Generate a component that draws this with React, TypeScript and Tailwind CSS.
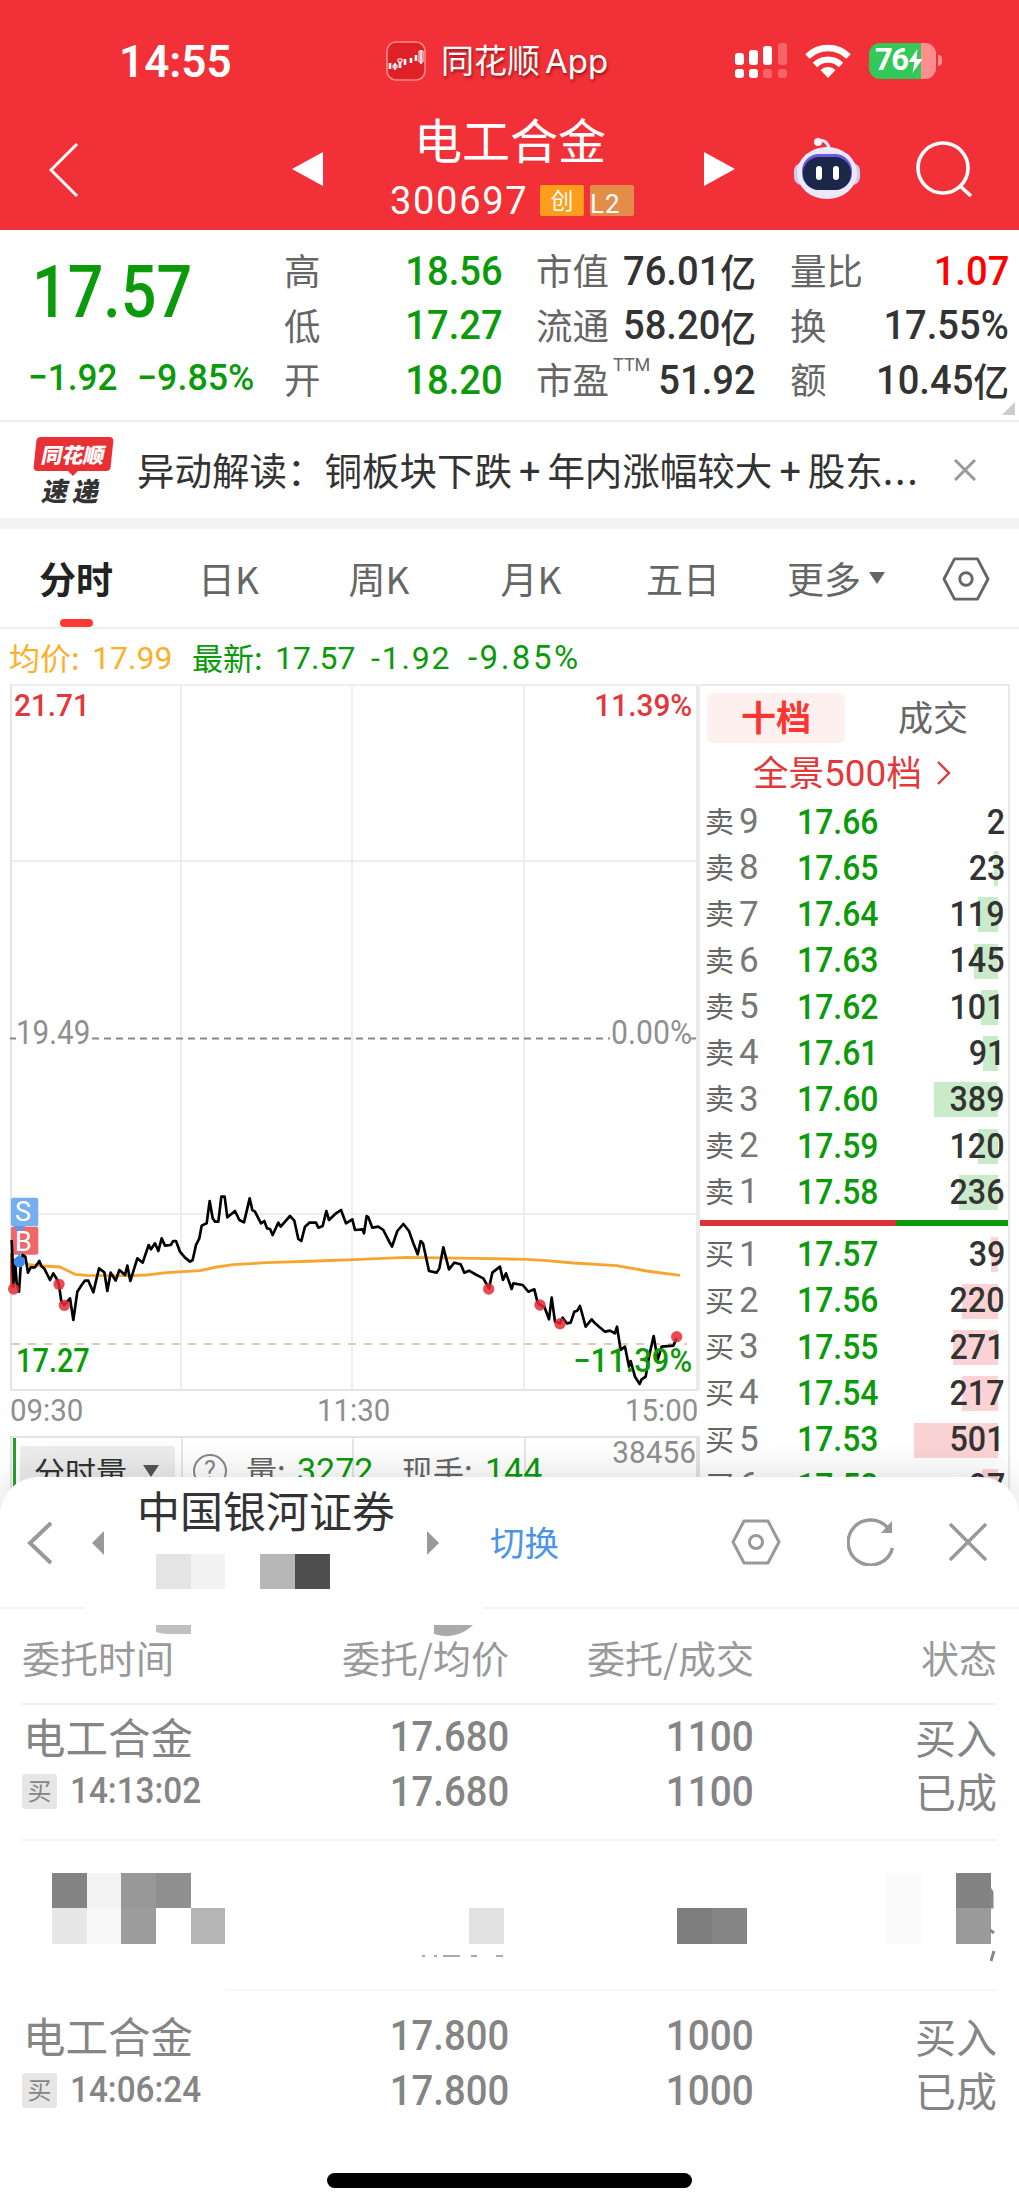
import type { ReactNode } from "react";

interface Level {
  side: string;
  no: number;
  price: string;
  qty: number;
  bar: number;
}

interface Order {
  time: string;
  price: string;
  amount: string;
}

const asks: Level[] = [
  { side: "卖", no: 9, price: "17.66", qty: 2, bar: 0 },
  { side: "卖", no: 8, price: "17.65", qty: 23, bar: 4 },
  { side: "卖", no: 7, price: "17.64", qty: 119, bar: 20 },
  { side: "卖", no: 6, price: "17.63", qty: 145, bar: 24 },
  { side: "卖", no: 5, price: "17.62", qty: 101, bar: 17 },
  { side: "卖", no: 4, price: "17.61", qty: 91, bar: 15 },
  { side: "卖", no: 3, price: "17.60", qty: 389, bar: 64 },
  { side: "卖", no: 2, price: "17.59", qty: 120, bar: 20 },
  { side: "卖", no: 1, price: "17.58", qty: 236, bar: 39 },
];

const bids: Level[] = [
  { side: "买", no: 1, price: "17.57", qty: 39, bar: 7 },
  { side: "买", no: 2, price: "17.56", qty: 220, bar: 36 },
  { side: "买", no: 3, price: "17.55", qty: 271, bar: 45 },
  { side: "买", no: 4, price: "17.54", qty: 217, bar: 36 },
  { side: "买", no: 5, price: "17.53", qty: 501, bar: 84 },
  { side: "买", no: 6, price: "17.52", qty: 97, bar: 16 },
];

const pricePoints =
  "35,240 40,380 45,300 50,370 57,395 62,320 68,285 76,290 84,338 92,322 105,322 118,303 124,318 133,326 150,360 160,340 172,360 177,375 184,425 193,435 210,415 220,480 232,395 245,375 255,362 265,362 280,397 297,325 313,337 322,393 332,338 347,362 358,330 375,345 382,317 391,363 412,295 428,308 446,255 453,268 465,250 475,273 485,235 495,257 512,255 520,243 528,243 540,275 555,293 570,305 578,300 588,255 598,235 605,197 620,190 629,123 638,175 645,185 655,185 664,110 674,110 682,172 705,153 718,180 732,187 749,115 757,150 765,155 783,190 793,183 801,205 810,207 818,225 835,188 842,200 870,168 883,182 895,237 904,243 915,200 928,188 948,188 955,203 968,198 979,153 987,180 1008,160 1023,150 1038,190 1057,178 1065,210 1088,208 1092,220 1100,168 1105,172 1117,203 1135,200 1150,210 1165,240 1176,260 1192,213 1210,192 1227,213 1240,250 1253,283 1262,243 1269,250 1287,333 1310,338 1318,325 1330,262 1347,328 1363,308 1382,313 1393,338 1407,332 1430,345 1450,355 1467,385 1477,338 1500,320 1509,360 1518,340 1535,387 1540,370 1568,375 1585,395 1603,388 1612,425 1620,435 1633,440 1647,478 1655,413 1665,485 1680,490 1688,473 1700,490 1712,488 1723,455 1732,452 1740,438 1757,500 1775,478 1785,490 1815,515 1830,512 1845,520 1851,500 1862,570 1875,560 1887,620 1892,603 1905,650 1919,672 1925,658 1937,650 1947,590 1961,528 1973,600 1985,560 2020,557 2030,535";

const avgPoints =
  "80,313 130,318 180,321 205,333 225,343 260,346 400,347 440,345 500,338 600,332 650,321 700,314 800,308 950,303 1080,298 1220,292 1420,295 1580,298 1640,302 1720,309 1850,317 1940,333 2040,346";

const redDots = [
  [41, 387],
  [177, 373],
  [193, 436],
  [1466, 387],
  [1620, 435],
  [1680, 491],
  [2030, 530],
];

const tabs = [
  { label: "日K", width: "w-[153px]" },
  { label: "周K", width: "w-[148px]" },
  { label: "月K", width: "w-[156px]" },
  { label: "五日", width: "w-[148px]" },
];

function Num({ children, className = "" }: { children: ReactNode; className?: string }) {
  return (
    <span className={`inline-block whitespace-nowrap font-[Roboto,sans-serif] ${className}`}>
      {children}
    </span>
  );
}

function Hexagon({ className }: { className: string }) {
  return (
    <svg viewBox="0 0 50 46" className={className} fill="none" stroke="currentColor" strokeWidth="3">
      <path d="M13 2h24l11 21-11 21H13L2 23z" strokeLinejoin="round" />
      <circle cx="25" cy="23" r="6.5" />
    </svg>
  );
}

function StatusBar() {
  return (
    <div className="flex h-[118px] items-center pt-[3px]">
      <Num className="mt-[2px] ml-[119px] w-[267px] font-['Inter'] text-[44px] font-semibold">
        14:55
      </Num>
      <svg viewBox="0 0 40 40" className="size-10 shrink-0">
        <rect x="1" y="1" width="38" height="38" rx="9" fill="#e02027" stroke="#ff8a86" strokeWidth="1.6" />
        <g fill="#fff" stroke="#fff">
          <path d="M4 22v6M14 21v6M19 18v6M25 17v5M30 14v6" strokeWidth="2.6" />
          <path d="M9 22v7M35 9v14" strokeWidth="1.6" />
          <path d="M7 24h4v3H7zM12 18h4v3h-4zM33 10h4v11h-4z" fill="none" strokeWidth="1" />
        </g>
      </svg>
      <span className="ml-[15px] w-[294px] shrink-0 text-[33px] leading-none [text-shadow:1px_2px_3px_rgba(90,0,0,.6)]">
        同花顺<span className="ml-[5px] font-['Inter'] text-[33px]">App</span>
      </span>
      <svg viewBox="0 0 52 36" className="h-9 w-[52px]" fill="#fff">
        <rect x="0" y="10" width="9" height="12" rx="3" />
        <rect x="14" y="7" width="9" height="15" rx="3" />
        <rect x="28" y="3" width="9" height="19" rx="3" />
        <rect x="43" y="0" width="9" height="22" rx="3" opacity=".25" />
        <rect x="0" y="26" width="9" height="9" rx="3" />
        <rect x="14" y="26" width="9" height="9" rx="3" />
        <rect x="28" y="26" width="9" height="9" rx="3" opacity=".25" />
        <rect x="43" y="26" width="9" height="9" rx="3" opacity=".25" />
      </svg>
      <svg viewBox="0 0 46 34" className="ml-[18px] h-[34px] w-[46px]" fill="none" stroke="#fff" strokeWidth="6.4">
        <path d="M2.5 12.5a29 29 0 0 1 41 0" />
        <path d="M10 21a18.5 18.5 0 0 1 26 0" />
        <path d="M23 34l-7.5-8a11 11 0 0 1 15 0z" fill="#fff" stroke="none" />
      </svg>
      <div className="ml-[18px] flex items-center">
        <div className="flex h-9 w-[67px] items-center overflow-hidden rounded-[11px] bg-[linear-gradient(90deg,#34c759_0_52px,#ff8f8d_52px)] pl-[6px]">
          <Num className="font-['Inter'] text-[31px] font-bold tracking-[-1.5px]">76</Num>
          <svg viewBox="0 0 14 24" className="h-6 w-[15px]" fill="#fff">
            <path d="M9 0L0 13h6l-2 11 10-14H8z" />
          </svg>
        </div>
        <div className="ml-[2px] h-[11px] w-[4px] rounded-r-full bg-[#ff8f8d]" />
      </div>
    </div>
  );
}

function TitleBar() {
  return (
    <div className="flex h-[112px]">
      <svg viewBox="0 0 30 54" className="mt-[25px] ml-[49px] h-[54px] w-[30px]" fill="none" stroke="#fff" strokeWidth="3">
        <path d="M28 1L2 27l26 26" />
      </svg>
      <svg viewBox="0 0 31 34" className="mt-[34px] ml-[213px] h-[34px] w-[31px]" fill="#fff">
        <path d="M31 0v34L0 17z" />
      </svg>
      <div className="flex w-[381px] flex-col items-center">
        <h1 className="mt-[-5px] mr-[7px] h-[62px] text-[48px] leading-[50px] whitespace-nowrap">电工合金</h1>
        <div className="flex h-[50px] w-full items-center gap-[6px] pl-[67px]">
          <Num className="mt-[3px] w-[144px] font-['Inter'] text-[38px] tracking-[1.7px]">300697</Num>
          <span className="flex h-[31px] w-[44px] items-center justify-center rounded-[2px] bg-[#ff9d1c] pb-[2px] text-[23px]">创</span>
          <Num className="flex h-[31px] w-[44px] items-center justify-center rounded-[2px] bg-[#e38d49] text-[26px]">
            <span className="-mt-[3px] leading-none tracking-[1px]">L2</span>
          </Num>
        </div>
      </div>
      <svg viewBox="0 0 31 34" className="mt-[34px] h-[34px] w-[31px]" fill="#fff">
        <path d="M0 0v34l31-17z" />
      </svg>
      <svg viewBox="0 0 66 62" className="mt-[19px] ml-[59px] h-[62px] w-[66px]">
        <path d="M24 4q9-3 12 10" fill="none" stroke="#f3eefc" strokeWidth="3" />
        <circle cx="24" cy="5" r="4" fill="#f6f2ff" />
        <rect x="0" y="26" width="66" height="22" rx="8" fill="#cfc8f5" />
        <ellipse cx="33" cy="36" rx="30" ry="26" fill="#ece9fb" />
        <rect x="8" y="17" width="50" height="36" rx="17" fill="#6a5be0" />
        <rect x="9" y="20" width="48" height="33" rx="16" fill="#1b2649" />
        <rect x="22" y="29" width="6" height="14" rx="3" fill="#fff" />
        <rect x="39" y="29" width="6" height="14" rx="3" fill="#fff" />
      </svg>
      <svg viewBox="0 0 56 56" className="mt-[23px] ml-[56px] size-14" fill="none" stroke="#fff" strokeWidth="3.6">
        <circle cx="27" cy="27" r="25" />
        <path d="M43 44l12 11" />
      </svg>
    </div>
  );
}

function Quote({ label, value, color = "text-[#333]", unit = "" }: { label: ReactNode; value: string; color?: string; unit?: string }) {
  return (
    <div className="flex h-[54.5px] items-center justify-between">
      <span className="relative -top-px text-[36.5px] leading-none text-[#666]">{label}</span>
      <span className={`flex origin-right scale-x-[0.93] items-center font-medium ${color}`}>
        <Num className="text-[41px]">{value}</Num>
        {unit && <span className="relative -top-px text-[38.5px] leading-none">{unit}</span>}
      </span>
    </div>
  );
}

function QuotePanel() {
  return (
    <section className="flex h-[192px] shrink-0 border-b-2 border-[#eee] pt-[12px]">
      <div className="w-[284px] text-[#0a9a0a]">
        <Num className="mt-[8px] ml-[32px] h-[84px] origin-left scale-x-[0.86] text-[73px] leading-[84px] font-medium">17.57</Num>
        <div className="mt-[20px] flex">
          <Num className="ml-[28px] w-[109px] origin-left scale-x-[0.95] text-[37px] leading-[48px] font-medium">−1.92</Num>
          <Num className="origin-left scale-x-[0.98] text-[36.5px] leading-[48px] font-medium">−9.85%</Num>
        </div>
      </div>
      <div className="w-[219px] pt-[2px]">
        <Quote label="高" value="18.56" color="text-[#0a9a0a]" />
        <Quote label="低" value="17.27" color="text-[#0a9a0a]" />
        <Quote label="开" value="18.20" color="text-[#0a9a0a]" />
      </div>
      <div className="ml-[33px] w-[220px] pt-[2px]">
        <Quote label="市值" value="76.01" unit="亿" />
        <Quote label="流通" value="58.20" unit="亿" />
        <Quote
          label={
            <>
              市盈
              <Num className="absolute -top-[5px] left-[77px] text-[18px]">TTM</Num>
            </>
          }
          value="51.92"
        />
      </div>
      <div className="ml-[34px] w-[219px] pt-[2px]">
        <Quote label="量比" value="1.07" color="text-[#ff0000]" />
        <Quote label="换" value="17.55%" />
        <Quote label="额" value="10.45" unit="亿" />
      </div>
      <svg viewBox="0 0 13 13" className="mb-[5px] -ml-[7px] size-[13px] self-end" fill="#ccc">
        <path d="M13 0v13H0z" />
      </svg>
    </section>
  );
}

function NewsBar() {
  return (
    <section className="flex h-[96px] shrink-0 items-center text-[37.5px] text-[#333]">
      <div className="relative ml-[33px] flex w-[80px] flex-col items-center">
        <div className="flex h-[34px] w-[77px] -skew-x-6 items-center justify-center rounded-[4px] bg-[#e93035] text-[21px] leading-none font-black whitespace-nowrap text-white">
          <span className="-skew-x-6">同花顺</span>
        </div>
        <div className="-mt-px size-0 border-x-[6px] border-t-[6px] border-x-transparent border-t-[#e93035]" />
        <div className="-ml-[3px] flex -skew-x-12 gap-[5px] text-[26px] leading-[28px] font-black">
          <span>速</span>
          <span>递</span>
        </div>
      </div>
      <p className="mt-[-2px] ml-[24px] w-[817px] leading-none whitespace-nowrap">
        异动解读：铜板块下跌<span className="mx-[7px] font-medium">+</span>年内涨幅较大<span className="mx-[7px] font-medium">+</span>股东
        <span className="tracking-[1.8px]">...</span>
      </p>
      <svg viewBox="0 0 22 22" className="size-[22px]" stroke="#999" strokeWidth="3">
        <path d="M1 1l20 20M21 1L1 21" />
      </svg>
    </section>
  );
}

function Tabs() {
  return (
    <nav className="flex h-[100px] shrink-0 border-b-2 border-[#eee] text-[37px] leading-[98px] text-[#666]">
      <div className="flex w-[152px] flex-col items-center font-bold text-[#222]">
        <span className="h-[90px]">分时</span>
        <div className="h-[9px] w-[33px] rounded-[4px] bg-[#fb3a35]" />
      </div>
      {tabs.map((tab) => (
        <div key={tab.label} className={`text-center ${tab.width}`}>
          {tab.label}
        </div>
      ))}
      <div className="flex w-[158px] items-center justify-center gap-[8px]">
        更多
        <svg viewBox="0 0 16 12" className="h-3 w-4" fill="#666">
          <path d="M0 0h16L8 12z" />
        </svg>
      </div>
      <Hexagon className="mt-[28px] ml-[27px] h-[44px] w-[48px]" />
    </nav>
  );
}

function Legend() {
  return (
    <div className="flex h-[55px] shrink-0 items-center pt-[3px] pl-[9px] text-[32px] text-[#0a9a0a]">
      <span className="-mt-[4px] w-[83px] text-[31px] leading-none text-[#fbb029]">均价:</span>
      <Num className="w-[100px] text-[#fbb029]">17.99</Num>
      <span className="-mt-[4px] w-[83px] text-[31px] leading-none">最新:</span>
      <Num className="w-[96px]">17.57</Num>
      <Num className="w-[97px] tracking-[1.8px]">-1.92</Num>
      <Num className="text-[33px] tracking-[2.5px]">-9.85%</Num>
    </div>
  );
}

function Chart() {
  return (
    <div className="relative h-[708px] w-[700px]">
      <svg viewBox="0 0 700 708" className="h-[708px] w-[700px]" fill="none">
        <path d="M10 1h688M10 177h688M10 530h688M181 1v705M352 1v705M524 1v705" stroke="#eee" strokeWidth="2" />
        <path d="M11 1v705M10 706h688" stroke="#e4e4e4" strokeWidth="2" />
        <path d="M698 1v705" stroke="#ebebeb" strokeWidth="4" />
        <path d="M10 354.5h6M92 354.5h518M691 354.5h5" stroke="#888" strokeWidth="1.8" strokeDasharray="7 5" />
        <path d="M12 660h675" stroke="#e3cdb0" strokeWidth="2" strokeDasharray="8 8" />
        <g transform="translate(0 476) scale(.33333)">
          <rect x="33" y="113" width="82" height="86" rx="6" fill="#77aef2" />
          <rect x="33" y="200" width="82" height="84" rx="6" fill="#ee676a" />
          <path d="M36 280v100" stroke="#ee5055" strokeWidth="12" />
          <path d="M40 198h36L58 220z" fill="#5b97e6" />
          <path d="M58 210v90" stroke="#5b97e6" strokeWidth="7" strokeDasharray="14 8" />
          <polyline points={avgPoints} stroke="#f8a52f" strokeWidth="8.5" strokeLinejoin="round" />
          <polyline points={pricePoints} stroke="#000" strokeWidth="8" strokeLinejoin="round" />
          <circle cx="58" cy="305" r="17" fill="#3d8be8" />
          {redDots.map(([x, y]) => (
            <circle key={x} cx={x} cy={y} r="17" fill="#e62a33" fillOpacity=".85" />
          ))}
        </g>
      </svg>
      <Num className="absolute top-[514px] left-[15px] text-[27px] leading-[28px] text-white">S</Num>
      <Num className="absolute top-[544px] left-[15px] text-[27px] leading-[28px] text-white">B</Num>
      <Num className="absolute top-px left-[14px] origin-left scale-x-[0.93] text-[32px] leading-[40px] font-medium text-[#e3383b]">21.71</Num>
      <Num className="absolute top-px right-[8px] origin-right scale-x-[0.93] text-[32px] leading-[40px] font-medium text-[#e3383b]">11.39%</Num>
      <Num className="absolute top-[329px] left-[16px] origin-left scale-x-[0.91] text-[32.5px] leading-[40px] text-[#8f8f8f]">19.49</Num>
      <Num className="absolute top-[329px] right-[8px] origin-right scale-x-[0.93] text-[32.5px] leading-[40px] text-[#8f8f8f]">0.00%</Num>
      <Num className="absolute top-[657px] left-[16px] origin-left scale-x-[0.89] text-[32.5px] leading-[40px] font-medium text-[#0a9a0a]">17.27</Num>
      <Num className="absolute top-[657px] right-[8px] origin-right scale-x-[0.95] text-[32.5px] leading-[40px] font-medium text-[#0a9a0a]">−11.39%</Num>
    </div>
  );
}

function TimeAxis() {
  return (
    <div className="ml-[10px] grid h-[44px] w-[688px] grid-cols-3 items-center pb-[4px] text-[32px] leading-[38px] text-[#8f8f8f]">
      <Num className="-mt-[5px] origin-left scale-x-[0.92]">09:30</Num>
      <Num className="-mt-[5px] scale-x-[0.92] text-center">11:30</Num>
      <Num className="-mt-[5px] origin-right scale-x-[0.92] text-right">15:00</Num>
    </div>
  );
}

function VolumeBar() {
  return (
    <div className="ml-[10px] flex h-[90px] w-[690px] border-t-2 border-r-4 border-l-2 border-[#e4e4e4] bg-[linear-gradient(90deg,transparent_169px,#e6e6e6_169px_171px,transparent_171px_340px,#e6e6e6_340px_342px,transparent_342px_512px,#e6e6e6_512px_514px,transparent_514px)] text-[31px] text-[#666]">
      <div className="ml-px w-[3px] bg-[#27a12c]" />
      <div className="mt-[8px] ml-[4px] flex h-[52px] w-[155px] items-center gap-[16px] rounded-[4px] bg-[#ececec] pb-[3px] pl-[14px] text-[#333]">
        <span className="leading-none">分时量</span>
        <svg viewBox="0 0 16 12" className="h-3 w-4" fill="#555">
          <path d="M0 0h16L8 12z" />
        </svg>
      </div>
      <div className="mt-[16px] ml-[18px] flex size-[34px] items-center justify-center rounded-full border-2 border-[#888] font-[Roboto,sans-serif] text-[25px] text-[#888]">
        ?
      </div>
      <span className="mt-[14px] ml-[19px] w-[51px] leading-[36px]">量:</span>
      <Num className="mt-[13px] w-[105px] text-[34px] leading-[38px] text-[#0a9a0a]">3272</Num>
      <span className="mt-[14px] w-[83px] leading-[36px]">现手:</span>
      <Num className="mt-[13px] text-[34px] leading-[38px] text-[#0a9a0a]">144</Num>
      <Num className="mt-[-4px] ml-auto origin-right scale-x-[0.93] text-[32px] leading-[36px] text-[#8f8f8f]">38456</Num>
    </div>
  );
}

function LevelRow({ level, barColor }: { level: Level; barColor: string }) {
  return (
    <div className="relative flex h-[46.3px] items-center pl-[5px]">
      <div className={`absolute right-[10px] h-[35px] ${barColor}`} style={{ width: level.bar }} />
      <span className="relative -top-[2px] w-[34px] text-[29px] leading-none text-[#666]">{level.side}</span>
      <Num className="text-[35px] text-[#777]">{level.no}</Num>
      <Num className="absolute left-[97px] origin-left scale-x-[0.9] text-[35.5px] font-medium text-[#0a9a0a]">{level.price}</Num>
      <Num className="absolute right-[3px] origin-right scale-x-[0.91] text-[35.5px] font-medium text-[#333]">{level.qty}</Num>
    </div>
  );
}

function OrderBook() {
  return (
    <aside className="h-[842px] w-[310px] overflow-hidden border-t-2 border-r-2 border-[#e9e9e9]">
      <div className="mt-[7px] flex text-[35px] leading-[46px]">
        <div className="ml-[7px] h-[50px] w-[138px] rounded-[5px] bg-[#fff0f0] text-center font-bold text-[#fb3631]">十档</div>
        <div className="ml-[53px] text-[#666]">成交</div>
      </div>
      <div className="flex h-[56px] items-center gap-[16px] pt-[3px] pl-[53px] text-[35.5px] leading-none text-[#e3383b]">
        <span className="w-[168px] whitespace-nowrap">
          全景<Num className="text-[37px] leading-none">500</Num>档
        </span>
        <svg viewBox="0 0 14 24" className="h-6 w-[14px]" fill="none" stroke="currentColor" strokeWidth="2.4">
          <path d="M1 1l11 11L1 23" />
        </svg>
      </div>
      {asks.map((level) => (
        <LevelRow key={level.no} level={level} barColor="bg-[#c9ebca]" />
      ))}
      <div className="mt-[4px] mb-[6px] flex h-[6px]">
        <div className="w-[196px] bg-[#de3336]" />
        <div className="flex-1 bg-[#0a9a0a]" />
      </div>
      {bids.map((level) => (
        <LevelRow key={level.no} level={level} barColor="bg-[#fbd3d5]" />
      ))}
    </aside>
  );
}

function SheetHeader() {
  return (
    <div className="flex h-[130px] text-[#999]">
      <svg viewBox="0 0 26 44" className="mt-[44px] ml-[27px] h-[44px] w-[26px]" fill="none" stroke="currentColor" strokeWidth="4">
        <path d="M24 2L3 22l21 20" />
      </svg>
      <svg viewBox="0 0 12 24" className="mt-[54px] ml-[39px] h-6 w-3" fill="currentColor">
        <path d="M12 0v24L0 12z" />
      </svg>
      <div className="ml-[33px] w-[259px]">
        <h2 className="text-[43px] leading-[65px] whitespace-nowrap text-[#333]">中国银河证券</h2>
        <div className="mt-[12px] ml-[19px] flex h-[35px]">
          <div className="w-[35px] bg-[#e4e4e4]" />
          <div className="w-[34px] bg-[#f2f2f2]" />
          <div className="ml-[35px] w-[35px] bg-[#b7b7b7]" />
          <div className="w-[35px] bg-[#4e4e4e]" />
        </div>
      </div>
      <svg viewBox="0 0 12 24" className="mt-[54px] ml-[31px] h-6 w-3" fill="currentColor">
        <path d="M0 0v24l12-12z" />
      </svg>
      <span className="mt-[46px] ml-[51px] w-[241px] text-[34.5px] leading-[36px] text-[#4a94ea]">切换</span>
      <Hexagon className="mt-[42px] h-[46px] w-[50px]" />
      <svg viewBox="0 0 48 48" className="mt-[41px] ml-[66px] size-12" fill="none" stroke="currentColor" strokeWidth="3.4">
        <path d="M45.5 30A22.5 22.5 0 1 1 40 9" />
        <path d="M45 3v12H34z" fill="currentColor" stroke="none" />
      </svg>
      <svg viewBox="0 0 38 38" className="mt-[46px] ml-[54px] size-[38px]" stroke="currentColor" strokeWidth="3.4">
        <path d="M1 1l36 36M37 1L1 37" />
      </svg>
    </div>
  );
}

function OrderRow({ order }: { order: Order }) {
  return (
    <div className="grid h-[134px] grid-cols-[280px_207px_245px_243px] pt-[5px] text-[#858585]">
      <div>
        <div className="ml-px text-[42.5px] leading-[52px]">电工合金</div>
        <div className="flex h-[58px] items-center gap-[13px]">
          <span className="flex size-[35px] items-center justify-center rounded-[3px] bg-[#e6e6e6] pb-[2px] text-[24px]">买</span>
          <Num className="origin-left scale-x-[0.9] text-[37px] font-medium">{order.time}</Num>
        </div>
      </div>
      <div className="-mt-px flex flex-col items-end text-[43px] leading-[54.5px] font-medium">
        <Num className="origin-right scale-x-[0.89]">{order.price}</Num>
        <Num className="origin-right scale-x-[0.89]">{order.price}</Num>
      </div>
      <div className="-mt-px flex flex-col items-end text-[43px] leading-[54.5px] font-medium">
        <Num className="origin-right scale-x-[0.9]">{order.amount}</Num>
        <Num className="origin-right scale-x-[0.9]">{order.amount}</Num>
      </div>
      <div className="text-right text-[41px] leading-[54px]">
        <div className="-mt-px">买入</div>
        <div>已成</div>
      </div>
    </div>
  );
}

// Censored order between the two visible ones
function MaskedRow() {
  return (
    <div className="flex h-[148px] pt-[32px]">
      <div className="ml-[30px] grid h-[70px] grid-cols-[35px_34px_35px_35px_34px] grid-rows-[35px_36px]">
        <div className="bg-[#838383]" />
        <div className="bg-[#f4f4f4]" />
        <div className="bg-[#989898]" />
        <div className="bg-[#8f8f8f]" />
        <div />
        <div className="bg-[#e7e7e7]" />
        <div className="bg-[#f8f8f8]" />
        <div className="bg-[#9c9c9c]" />
        <div />
        <div className="bg-[#b5b5b5]" />
      </div>
      <div className="relative mt-[35px] ml-[244px] h-[36px] w-[35px] bg-[#e1e1e1]">
        <svg viewBox="0 0 84 3" className="absolute top-[47px] -left-[48px] h-[3px] w-[84px]" stroke="#aaa" strokeWidth="2">
          <path d="M1 1h3M13 1h3M22 1h17M50 1h6M75 1h7" />
        </svg>
      </div>
      <div className="mt-[35px] ml-[173px] flex h-[36px]">
        <div className="w-[35px] bg-[#7e7e7e]" />
        <div className="w-[35px] bg-[#858585]" />
      </div>
      <div className="ml-[139px] h-[71px] w-[35px] bg-[#fafafa]" />
      <div className="relative ml-[35px] w-[35px]">
        <div className="h-[35px] bg-[#828282]" />
        <div className="h-[36px] bg-[#9a9a9a]" />
        <svg viewBox="0 0 6 74" className="absolute top-[15px] left-[34px] h-[74px] w-[6px]" fill="none" stroke="#888" strokeWidth="3">
          <path d="M0 1l2 3v15H0M0 42l4 3M4 63L1 73" />
        </svg>
      </div>
    </div>
  );
}

export default function App() {
  return (
    <main className="flex h-[2209px] w-[1019px] flex-col overflow-hidden bg-white font-['Noto_Sans_CJK_SC',sans-serif]">
      <header className="h-[230px] shrink-0 bg-[#f23038] text-white">
        <StatusBar />
        <TitleBar />
      </header>

      <QuotePanel />
      <NewsBar />
      <div className="h-[11px] shrink-0 bg-[#f4f4f4]" />
      <Tabs />
      <Legend />

      {/* Chart and order book */}
      <div className="flex h-[793px] shrink-0">
        <div>
          <Chart />
          <TimeAxis />
          <VolumeBar />
        </div>
        <OrderBook />
      </div>

      {/* Trading sheet */}
      <section className="relative flex-1 rounded-t-[38px] bg-white shadow-[0_-4px_36px_rgba(0,0,0,.13)]">
        <SheetHeader />
        <div className="flex justify-between">
          <div className="h-[2px] w-[85px] bg-[#f2f2f2]" />
          <div className="h-[2px] w-[535px] bg-[#f2f2f2]" />
        </div>
        <svg viewBox="0 0 1019 13" className="mt-[16px] h-[13px] w-full">
          <path d="M156 0h35v9h-24q-5 0-11-2z" fill="#c0c0c0" />
          <path d="M434 0h39q-17 16-39 9z" fill="#aaa" />
        </svg>

        <div className="mx-[22px]">
          <div className="grid h-[67px] grid-cols-[280px_207px_245px_243px] items-center border-b-2 border-[#f1f1f1] pb-[29px] text-[38px] leading-[38px] text-[#999]">
            <span>委托时间</span>
            <span className="text-right">委托/均价</span>
            <span className="text-right">委托/成交</span>
            <span className="text-right">状态</span>
          </div>
          <OrderRow order={{ time: "14:13:02", price: "17.680", amount: "1100" }} />
          <div className="h-[2px] bg-[#f3f3f3]" />
          <MaskedRow />
          <div className="ml-[203px] h-[2px] bg-[#f6f6f6]" />
          <div className="mt-[13px]">
            <OrderRow order={{ time: "14:06:24", price: "17.800", amount: "1000" }} />
          </div>
        </div>
        <div className="mx-auto mt-[35px] h-[15px] w-[365px] rounded-full bg-black" />
      </section>
    </main>
  );
}
